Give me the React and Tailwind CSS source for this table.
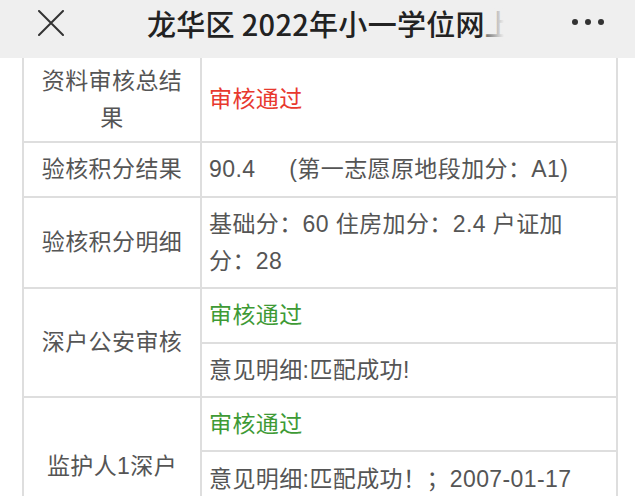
import React from 'react'

const font = { fontFamily: '"Liberation Sans", "Noto Sans CJK SC", sans-serif' }

function Cell({ children, className = '', color = 'text-[#555]' }) {
  return (
    <div className={`flex items-center pl-[7px] text-[23px] leading-[37px] tracking-[0.4px] ${color} ${className}`}>
      {children}
    </div>
  )
}

function Label({ children, className = '' }) {
  return (
    <div className={`w-[178px] shrink-0 border-r-2 border-[#dedede] flex justify-center text-center px-2 text-[23px] leading-[37px] tracking-[0.4px] text-[#555] ${className}`}>
      {children}
    </div>
  )
}

function App() {
  return (
    <div className="w-[635px] h-[496px] overflow-hidden bg-white" style={font}>
      {/* header */}
      <div className="h-[58px] bg-[#efefef] relative">
        <svg width="26" height="26" viewBox="0 0 26 26" className="absolute left-[38px] top-[10px]">
          <path d="M1 1 L25 25 M25 1 L1 25" stroke="#333" strokeWidth="2" strokeLinecap="round" />
        </svg>
        <div
          className="absolute left-[147px] top-[5px] w-[357px] overflow-hidden whitespace-nowrap text-[29px] font-medium text-[#222] leading-[36px] tracking-[0.3px]"
          style={{ fontFamily: '"Noto Sans CJK SC", sans-serif' }}
        >
          龙华区 2022年小一学位网上申请
          <div className="absolute right-0 top-0 h-full w-[18px] bg-gradient-to-r from-[#efefef]/40 to-[#efefef]" />
        </div>
        <div className="absolute left-[572px] top-[19px] flex gap-[7px]">
          <span className="w-[6px] h-[6px] rounded-full bg-[#333]" />
          <span className="w-[6px] h-[6px] rounded-full bg-[#333]" />
          <span className="w-[6px] h-[6px] rounded-full bg-[#333]" />
        </div>
      </div>

      {/* table */}
      <div className="ml-[22px] w-[596px] border-l-2 border-r-2 border-[#dedede]">
        <div className="flex h-[85px] border-b-2 border-[#dedede]">
          <Label className="items-center">资料审核总结果</Label>
          <Cell className="flex-1" color="text-[#e8392e]">审核通过</Cell>
        </div>
        <div className="flex h-[55px] border-b-2 border-[#dedede]">
          <Label className="items-center">验核积分结果</Label>
          <Cell className="flex-1 whitespace-pre">{'90.4     (第一志愿原地段加分：A1)'}</Cell>
        </div>
        <div className="flex h-[91px] border-b-2 border-[#dedede]">
          <Label className="items-center">验核积分明细</Label>
          <Cell className="flex-1">
            <span>基础分：60 住房加分：2.4 户证加<br />分：28</span>
          </Cell>
        </div>
        <div className="flex h-[109px] border-b-2 border-[#dedede]">
          <Label className="items-center">深户公安审核</Label>
          <div className="flex-1 flex flex-col">
            <Cell className="h-[55px] border-b-2 border-[#dedede]" color="text-[#3e9a35]">审核通过</Cell>
            <Cell className="flex-1">意见明细:匹配成功!</Cell>
          </div>
        </div>
        <div className="flex h-[140px]">
          <Label className="items-start pt-[50px]">监护人1深户</Label>
          <div className="flex-1 flex flex-col">
            <Cell className="h-[54px] border-b-2 border-[#dedede]" color="text-[#3e9a35]">审核通过</Cell>
            <Cell className="h-[54px]">意见明细:匹配成功！；2007-01-17</Cell>
          </div>
        </div>
      </div>
    </div>
  )
}

export default App
